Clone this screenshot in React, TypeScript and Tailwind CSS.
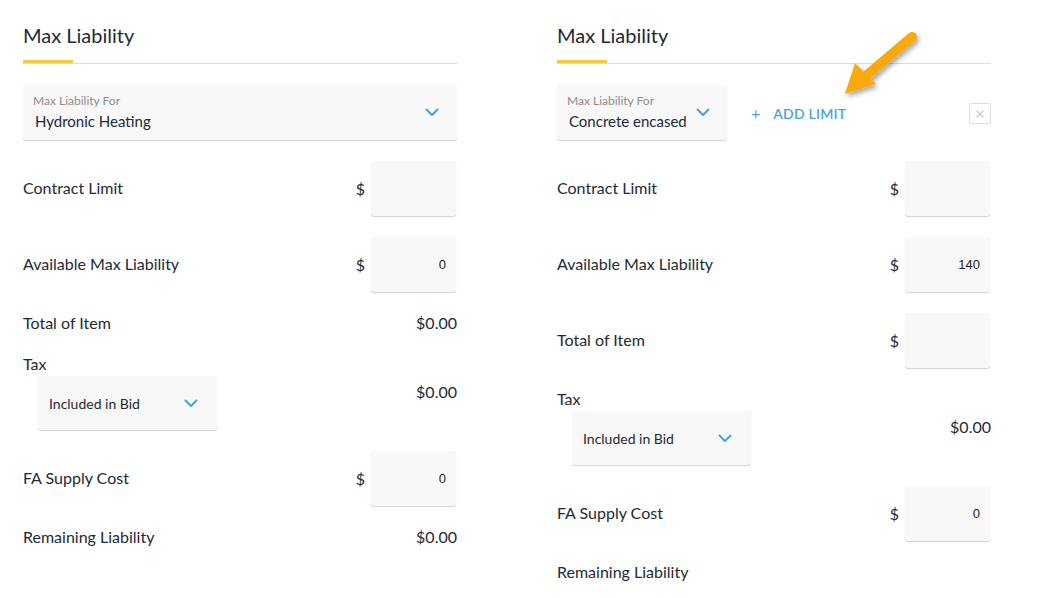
import React from "react";

const font = { fontFamily: "Lato, 'Noto Sans', sans-serif" };

function Chevron() {
  return (
    <svg width="14" height="9" viewBox="0 0 14 9" fill="none">
      <path d="M1.5 1.5 L7 7 L12.5 1.5" stroke="#4a9fe0" strokeWidth="2" strokeLinecap="round" strokeLinejoin="round" />
    </svg>
  );
}

function Header() {
  return (
    <div className="flex flex-col pt-[21px]">
      <div className="text-[20px] leading-[28px] text-[#1e2a36]">Max Liability</div>
      <div className="mt-[11px] h-[3px] w-[50px] bg-[#fcc93a]" />
      <div className="h-px w-full bg-[#dcdcdc]" />
    </div>
  );
}

function Input({ value }: { value?: string }) {
  return (
    <div className="flex items-center gap-[6px]">
      <span className="text-[16px] text-[#1e2a36]">$</span>
      <div
        className="mr-px flex h-[55px] w-[85px] items-center justify-end rounded-[3px] bg-[#f8f8f8] pr-[10px] text-[13px] text-[#222] shadow-[0_1px_1px_rgba(0,0,0,0.18)]"
        style={{ fontFamily: "'Liberation Sans', Arial, sans-serif" }}
      >
        {value}
      </div>
    </div>
  );
}

function InputRow({ label, value }: { label: string; value?: string }) {
  return (
    <div className="flex items-center justify-between">
      <span className="-mt-[2px] text-[16px] text-[#1e2a36]">{label}</span>
      <Input value={value} />
    </div>
  );
}

function TextRow({ label, value }: { label: string; value?: string }) {
  return (
    <div className="flex h-[20px] items-center justify-between text-[16px] leading-[20px] text-[#1e2a36]">
      <span>{label}</span>
      {value && <span>{value}</span>}
    </div>
  );
}

function TaxRow({ right }: { right: string }) {
  return (
    <div className="flex items-center justify-between">
      <div className="flex flex-col">
        <span className="text-[16px] leading-[20px] text-[#1e2a36]">Tax</span>
        <div className="ml-[15px] mt-[2px] flex h-[54px] w-[179px] items-center justify-between rounded-[3px] bg-[#f8f8f8] pl-[11px] pr-[19px] shadow-[0_1px_1px_rgba(0,0,0,0.18)]">
          <span className="text-[14px] text-[#1e2a36]">Included in Bid</span>
          <Chevron />
        </div>
      </div>
      <span className="text-[16px] text-[#1e2a36]">{right}</span>
    </div>
  );
}

function LeftPanel() {
  return (
    <div className="flex w-[434px] flex-col">
      <Header />
      <div className="mt-[21px] flex flex-col gap-[21px]">
        <div className="flex h-[55px] items-center justify-between rounded-[3px] bg-[#f8f8f8] pl-[10px] pr-[18px] shadow-[0_1px_1px_rgba(0,0,0,0.18)]">
          <div className="-mt-[2px] flex flex-col">
            <span className="text-[12px] leading-[16px] text-[#8c8c8c]">Max Liability For</span>
            <span className="ml-[2px] mt-[3px] text-[15px] leading-[18px] text-[#1e2a36]">Hydronic Heating</span>
          </div>
          <Chevron />
        </div>
        <InputRow label="Contract Limit" />
        <InputRow label="Available Max Liability" value="0" />
        <TextRow label="Total of Item" value="$0.00" />
        <TaxRow right="$0.00" />
        <InputRow label="FA Supply Cost" value="0" />
        <TextRow label="Remaining Liability" value="$0.00" />
      </div>
    </div>
  );
}

function RightPanel() {
  return (
    <div className="flex w-[434px] flex-col">
      <Header />
      <div className="mt-[21px] flex flex-col gap-[21px]">
        <div className="flex items-center">
          <div className="flex h-[55px] w-[170px] items-center justify-between rounded-[3px] bg-[#f8f8f8] pl-[10px] pr-[17px] shadow-[0_1px_1px_rgba(0,0,0,0.18)]">
            <div className="-mt-[2px] flex flex-col">
              <span className="text-[12px] leading-[16px] text-[#8c8c8c]">Max Liability For</span>
              <span className="ml-[2px] mt-[3px] text-[15px] leading-[18px] text-[#1e2a36]">Concrete encased</span>
            </div>
            <Chevron />
          </div>
          <div className="ml-[24px] flex items-center gap-[13px] text-[#4aa3e0]">
            <span className="text-[16px] leading-none">+</span>
            <span className="mt-[1px] text-[14px] font-semibold tracking-[0.2px]">ADD LIMIT</span>
          </div>
          <div className="ml-auto mt-[2px] flex h-[21px] w-[22px] items-center justify-center rounded-[2px] border border-[#dedede]">
            <svg width="10" height="10" viewBox="0 0 10 10">
              <path d="M1.5 1.5 L8.5 8.5 M8.5 1.5 L1.5 8.5" stroke="#d2d2d2" strokeWidth="1.6" />
            </svg>
          </div>
        </div>
        <InputRow label="Contract Limit" />
        <InputRow label="Available Max Liability" value="140" />
        <InputRow label="Total of Item" />
        <TaxRow right="$0.00" />
        <InputRow label="FA Supply Cost" value="0" />
        <TextRow label="Remaining Liability" />
      </div>
    </div>
  );
}

function Arrow() {
  return (
    <svg className="pointer-events-none absolute left-0 top-0" width="1047" height="598">
      <defs>
        <filter id="sh" x="-50%" y="-50%" width="200%" height="200%">
          <feDropShadow dx="2" dy="3" stdDeviation="2.5" floodColor="#000" floodOpacity="0.35" />
        </filter>
      </defs>
      <g filter="url(#sh)">
        <line x1="912" y1="37" x2="866" y2="76" stroke="#f7a90c" strokeWidth="10" strokeLinecap="round" />
        <polygon points="845,94 855,63 876,84" fill="#f7a90c" />
      </g>
    </svg>
  );
}

export default function App() {
  return (
    <div className="relative h-[598px] w-[1047px] overflow-hidden bg-white" style={font}>
      <div className="flex gap-[100px] pl-[23px]">
        <LeftPanel />
        <RightPanel />
      </div>
      <Arrow />
    </div>
  );
}
